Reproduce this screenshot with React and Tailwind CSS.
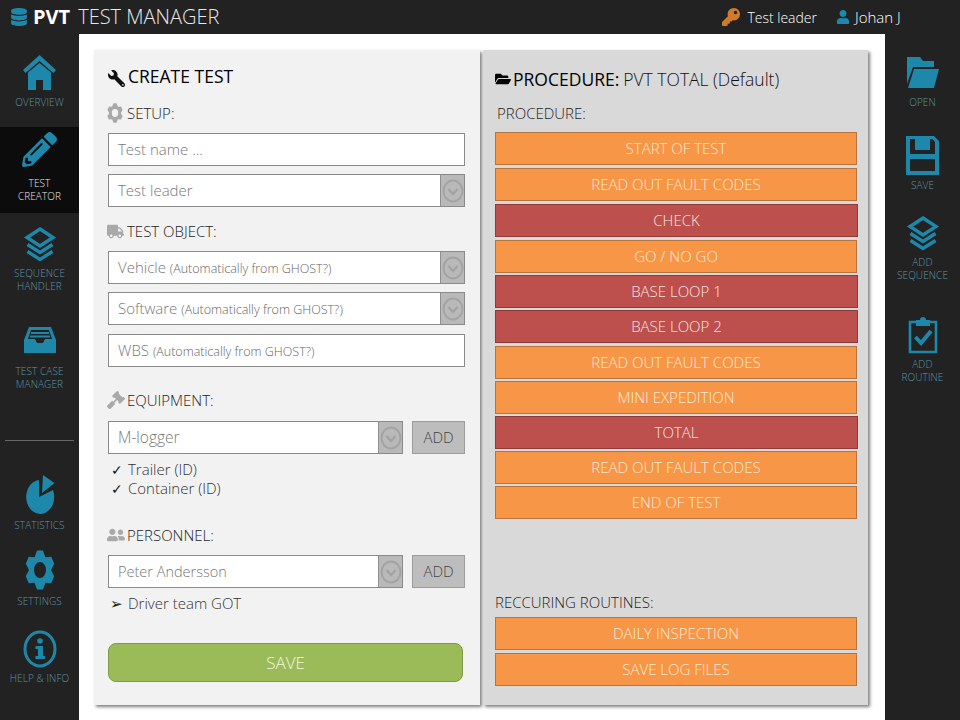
import { FaDatabase, FaPencilAlt, FaFolderOpen, FaWrench, FaTruck, FaGavel, FaUserFriends, FaKey, FaUser } from 'react-icons/fa';

const TEAL = '#1e88aa';

const Layers = ({ size = 32 }) => (
    <svg width={size} height={size} viewBox="0 0 32 36" fill="none" stroke={TEAL} strokeWidth="3.4">
        <path d="M16 3 L29 11.5 L16 20 L3 11.5 Z" />
        <path d="M3.5 18.5 L16 26.5 L28.5 18.5" />
        <path d="M3.5 25.5 L16 33.5 L28.5 25.5" />
    </svg>
);

const Home = () => (
    <svg width="33" height="35" viewBox="0 0 33 35" fill={TEAL}>
        <path d="M16.500 0 L33 15 L30.500 18 L16.500 6 L2.500 18 L0 15 Z" />
        <path d="M5 17.500 L16.500 8 L28 17.500 V35 H20 V25 H13 V35 H5 Z" />
    </svg>
);

const Inbox = () => (
    <svg width="32" height="26" viewBox="0 0 32 26">
        <path d="M5 0 H27 L32 13 V26 H0 V13 Z" fill={TEAL} />
        <path d="M7 3 H25 L28 12 H21 L19 16 H13 L11 12 H4 Z" fill="#222222" />
        <path d="M7 6 H25 M6 9.500 H26" stroke={TEAL} strokeWidth="2" />
    </svg>
);

const Pie = () => (
    <svg width="30" height="40" viewBox="0 0 30 40" fill={TEAL}>
        <path d="M18 0 L29.500 8 L17 18 Z" />
        <path d="M14 5 V22 L28 15 A14 17 0 1 1 14 5 Z" />
    </svg>
);

// six-tooth gear, computed once so the same shape serves both colours
const gearPath = (() => {
    const pts = [];
    for (let i = 0; i < 6; i++) {
        const a = (i * Math.PI) / 3 - Math.PI / 2;
        [[-0.5, 0.74], [-0.2, 1], [0.2, 1], [0.5, 0.74]].forEach(([da, r]) => {
            pts.push(`${(50 + 50 * r * Math.cos(a + da)).toFixed(1)} ${(50 + 50 * r * Math.sin(a + da)).toFixed(1)}`);
        });
    }
    return `M${pts.join(' L')} Z M50 30 A20 20 0 1 0 50 70 A20 20 0 1 0 50 30 Z`;
})();

const Gear = ({ width, height, color }) => (
    <svg width={width} height={height} viewBox="0 0 100 100" preserveAspectRatio="none">
        <path d={gearPath} fill={color} fillRule="evenodd" />
    </svg>
);

const Folder = () => (
    <svg width="32" height="31" viewBox="0 0 32 31" fill={TEAL}>
        <path d="M0 0 H13 L16 4 H27 V10 H6 L0 27 Z" />
        <path d="M7 12 H32 L27 31 H1 Z" />
    </svg>
);

const Floppy = () => (
    <svg width="33" height="39" viewBox="0 0 33 39">
        <path d="M0 0 H28 L33 5 V39 H0 Z M4 3 V18 H29 V6 L26.500 3 H24 V14 H9 V3 Z M4 23 V35 H29 V23 Z" fill={TEAL} fillRule="evenodd" />
        <rect x="18" y="4" width="4" height="8" fill={TEAL} />
    </svg>
);

const Clipboard = () => (
    <svg width="30" height="38" viewBox="0 0 30 38">
        <path d="M2 6 H28 V36 H2 Z" fill="none" stroke={TEAL} strokeWidth="2.600" />
        <path d="M8 4 H12 A3 3 0 0 1 18 4 H22 V10 H8 Z" fill={TEAL} />
        <path d="M7.500 21 L13 27 L23 15" fill="none" stroke={TEAL} strokeWidth="4" />
    </svg>
);

const InfoCircle = () => (
    <svg width="34" height="38" viewBox="0 0 34 38">
        <ellipse cx="17" cy="19" rx="15" ry="17" fill="none" stroke={TEAL} strokeWidth="3" />
        <circle cx="17" cy="11" r="2.800" fill={TEAL} />
        <path d="M12.500 16 H20 V26 H22 V29 H12.500 V26 H15 V19 H12.500 Z" fill={TEAL} />
    </svg>
);

const NavItem = ({ icon, label, className = '', labelClass = 'mt-[4px]', active = false }) => (
    <div className={`flex flex-col items-center ${className}`}>
        <div className="flex items-center justify-center h-[40px] text-[#1e88aa]">{icon}</div>
        <div className={`text-[10px] tracking-[0.1px] leading-[13px] text-center font-light ${labelClass} ${active ? 'text-[#e6e6e6]' : 'text-[#5b96a6]'}`}>
            {label}
        </div>
    </div>
);

const Chevron = () => (
    <div className="w-[24px] shrink-0 bg-[#b9b9b9] border-l border-[#8f8f8f] flex items-center justify-center">
        <svg width="22" height="24" viewBox="0 0 22 24" fill="none" stroke="#a3a3a3" strokeWidth="2">
            <ellipse cx="11" cy="12" rx="9.500" ry="10.500" />
            <path d="M6.500 10 L11 15 L15.500 10" strokeWidth="2.400" />
        </svg>
    </div>
);

const Field = ({ children, dropdown = false, className = 'mt-[8px]' }) => (
    <div className={`h-[33px] flex bg-white border border-[#8a8a8a] ${className}`}>
        <div className="flex-1 px-[9px] text-[15px] leading-[30px] font-light text-[#777] whitespace-nowrap overflow-hidden">{children}</div>
        {dropdown && <Chevron />}
    </div>
);

const Hint = ({ children }) => <span className="text-[12.500px] text-[#666]">{children}</span>;

const SectionLabel = ({ icon, children, className = '' }) => (
    <div className={`flex items-center h-[20px] text-[15px] font-light text-[#222] ${className}`}>
        <span className="w-[20px] -ml-px flex text-[#a9a9a9]">{icon}</span>
        <span>{children}</span>
    </div>
);

const AddRow = ({ value, className = '' }) => (
    <div className={`flex gap-[9px] ${className}`}>
        <Field dropdown className="flex-1">{value}</Field>
        <div className="w-[53px] h-[33px] bg-[#bdbdbd] border border-[#9c9c9c] text-[15px] leading-[31px] text-center font-light text-[#444]">ADD</div>
    </div>
);

const Step = ({ label, red = false, className = '' }) => (
    <div className={`h-[33px] border text-[15px] leading-[31px] text-center font-light ${red ? 'bg-[#bd4f4c] border-[#8f3a38] text-[#f6e6e5] -mr-px' : 'bg-[#f79646] border-[#b8743c] text-[#fdebd9]'} ${className}`}>
        {label}
    </div>
);

const steps = [
    { label: 'START OF TEST', gap: '' },
    { label: 'READ OUT FAULT CODES', gap: 'mt-[3px]' },
    { label: 'CHECK', red: true, gap: 'mt-[3px]' },
    { label: 'GO / NO GO', gap: 'mt-[3px]' },
    { label: 'BASE LOOP 1', red: true, gap: 'mt-[2px]' },
    { label: 'BASE LOOP 2', red: true, gap: 'mt-[2px]' },
    { label: 'READ OUT FAULT CODES', gap: 'mt-[3px]' },
    { label: 'MINI EXPEDITION', gap: 'mt-[2px]' },
    { label: 'TOTAL', red: true, gap: 'mt-[2px]' },
    { label: 'READ OUT FAULT CODES', gap: 'mt-[2px]' },
    { label: 'END OF TEST', gap: 'mt-[2px]' },
];

const Ticked = ({ children }) => (
    <div className="flex items-center">
        <span className="w-[20px] pl-[3px] text-[14px] text-[#111]">✓</span>
        {children}
    </div>
);

const App = () => {
    return (
        <div className="w-[960px] h-[720px] overflow-hidden flex flex-col bg-[#222222] font-['Open_Sans','Liberation_Sans',sans-serif]">
            <header className="h-[34px] shrink-0 flex items-center text-white">
                <FaDatabase size={18} className="ml-[10px] text-[#1e88aa]" />
                <span className="ml-[5px] text-[20px] font-bold">PVT</span>
                <span className="ml-[8px] text-[20px] font-light text-[#e8e8e8]">TEST MANAGER</span>
                <FaKey size={18} className="ml-[503px] text-[#d07a2c]" />
                <span className="ml-[7px] text-[14px] font-light">Test leader</span>
                <FaUser size={14} className="ml-[19px] text-[#1e88aa]" />
                <span className="ml-[5px] text-[15px] font-light">Johan J</span>
            </header>

            <div className="flex-1 flex min-h-0">
                <nav className="w-[79px] shrink-0 flex flex-col">
                    <NavItem className="pt-[18px] h-[93px]" icon={<Home />} label="OVERVIEW" />
                    <NavItem className="pt-[2px] h-[86px] bg-[#0c0c0c]" labelClass="mt-[8px]" active icon={<FaPencilAlt size={35} />} label={<>TEST<br />CREATOR</>} />
                    <NavItem className="pt-[11px] h-[98px]" labelClass="mt-[3px]" icon={<Layers size={36} />} label={<>SEQUENCE<br />HANDLER</>} />
                    <NavItem className="pt-[9px] h-[129px]" labelClass="mt-[5px]" icon={<Inbox />} label={<>TEST CASE<br />MANAGER</>} />
                    <div className="h-px mx-[5px] bg-[#666]" />
                    <NavItem className="pt-[34px] h-[91px]" icon={<Pie />} label="STATISTICS" />
                    <NavItem className="pt-[18px] h-[76px]" labelClass="mt-[5px]" icon={<Gear width={30} height={40} color={TEAL} />} label="SETTINGS" />
                    <NavItem className="pt-[21px]" labelClass="mt-[3px]" icon={<InfoCircle />} label="HELP & INFO" />
                </nav>

                <main className="flex-1 bg-white pt-[16px] pl-[15px] pr-[17px] flex gap-[3px] items-start">
                    <section className="w-[386px] h-[655px] bg-[#f2f2f2] shadow-[2px_2px_3px_rgba(0,0,0,0.5)] pl-[14px] pr-[15px] pt-[14px]">
                        <div className="flex items-center h-[24px] text-[17.500px] font-normal text-black">
                            <FaWrench size={17} className="mt-[4px] mr-[3px] -scale-x-100 text-[#111]" />
                            CREATE TEST
                        </div>
                        <SectionLabel className="mt-[15px]" icon={<Gear width={16} height={20} color="#a9a9a9" />}>SETUP:</SectionLabel>
                        <Field className="mt-[10px]">Test name ...</Field>
                        <Field dropdown>Test leader</Field>

                        <SectionLabel className="mt-[14px]" icon={<FaTruck size={17} />}>TEST OBJECT:</SectionLabel>
                        <Field className="mt-[10px]" dropdown>Vehicle <Hint>(Automatically from GHOST?)</Hint></Field>
                        <Field dropdown>Software <Hint>(Automatically from GHOST?)</Hint></Field>
                        <Field className="mt-[9px]">WBS <Hint>(Automatically from GHOST?)</Hint></Field>

                        <SectionLabel className="mt-[23px]" icon={<FaGavel size={18} />}>EQUIPMENT:</SectionLabel>
                        <AddRow className="mt-[11px]" value={<span className="text-[15.500px]">M-logger</span>} />
                        <div className="mt-[6px] text-[15px] leading-[19px] font-light text-[#333]">
                            <Ticked>Trailer (ID)</Ticked>
                            <Ticked>Container (ID)</Ticked>
                        </div>

                        <SectionLabel className="mt-[27px]" icon={<FaUserFriends size={18} />}>PERSONNEL:</SectionLabel>
                        <AddRow className="mt-[10px]" value={<span className="text-[14.500px]">Peter Andersson</span>} />
                        <div className="mt-[5px] flex items-center text-[15px] leading-[20px] font-light text-[#333]">
                            <span className="ml-[2px] w-[18px] text-[15px] text-[#111]">➢</span>Driver team GOT
                        </div>

                        <button className="mt-[30px] w-[355px] h-[39px] block rounded-[8px] bg-[#9bbb59] border border-[#7f9a49] text-[17px] font-light text-[#f0f5e4]">
                            SAVE
                        </button>
                    </section>

                    <section className="w-[385px] h-[655px] bg-[#d9d9d9] shadow-[2px_2px_3px_rgba(0,0,0,0.5)] pl-[12px] pr-[11px] pt-[17px]">
                        <div className="flex items-center h-[24px] text-[#111]">
                            <FaFolderOpen size={16} className="mr-[2px] text-black" />
                            <span className="text-[17.500px] font-normal text-black">PROCEDURE:</span>
                            <span className="ml-[4px] text-[17.500px] font-light">PVT TOTAL (Default)</span>
                        </div>
                        <div className="mt-[12px] ml-[2px] h-[20px] text-[15px] leading-[20px] font-light text-[#222]">PROCEDURE:</div>
                        <div className="mt-[9px] flex flex-col">
                            {steps.map((step, i) => (
                                <Step key={i} label={step.label} red={step.red} className={step.gap} />
                            ))}
                        </div>
                        <div className="mt-[73px] h-[20px] text-[15px] leading-[20px] font-light text-[#222]">RECCURING ROUTINES:</div>
                        <div className="mt-[5px] flex flex-col gap-[3px]">
                            <Step label="DAILY INSPECTION" />
                            <Step label="SAVE LOG FILES" />
                        </div>
                    </section>
                </main>

                <nav className="w-[75px] shrink-0 flex flex-col">
                    <NavItem className="pt-[18px] h-[93px]" icon={<Folder />} label="OPEN" />
                    <NavItem className="pt-[8px] h-[80px]" icon={<Floppy />} label="SAVE" />
                    <NavItem className="pt-[6px] h-[100px]" labelClass="mt-[3px]" icon={<Layers size={36} />} label={<>ADD<br />SEQUENCE</>} />
                    <NavItem className="pt-[8px]" labelClass="mt-[3px]" icon={<Clipboard />} label={<>ADD<br />ROUTINE</>} />
                </nav>
            </div>
        </div>
    );
};

export default App;
